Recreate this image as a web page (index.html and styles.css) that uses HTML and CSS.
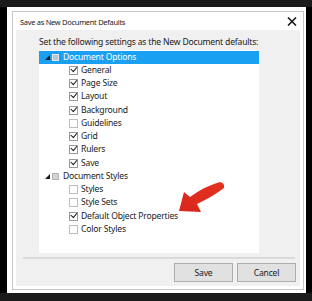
FILE: index.html
```html
<!DOCTYPE html>
<html>
<head>
    <meta charset="utf-8">
    <title>Save as New Document Defaults</title>
    <link rel="stylesheet" href="styles.css">
</head>
<body>
    <div class="screen">
        <div class="dialog">
            <div class="frame">
                <div class="titlebar">
                    <span class="title">Save as New Document Defaults</span>
                    <svg class="close" width="10" height="9" viewBox="0 0 10 9">
                        <path d="M1 0.5 L9 8.5 M9 0.5 L1 8.5" stroke="#1a1a1a" stroke-width="1.6" fill="none"/>
                    </svg>
                </div>
                <div class="content">
                    <p class="intro">Set the following settings as the New Document defaults:</p>
                    <div class="tree">
                        <div class="row group selected">
                            <span class="expander"></span>
                            <span class="folder"></span>
                            <span class="label">Document Options</span>
                        </div>
                        <div class="row item"><span class="check on"></span><span class="label">General</span></div>
                        <div class="row item"><span class="check on"></span><span class="label">Page Size</span></div>
                        <div class="row item"><span class="check on"></span><span class="label">Layout</span></div>
                        <div class="row item"><span class="check on"></span><span class="label">Background</span></div>
                        <div class="row item"><span class="check"></span><span class="label">Guidelines</span></div>
                        <div class="row item"><span class="check on"></span><span class="label">Grid</span></div>
                        <div class="row item"><span class="check on"></span><span class="label">Rulers</span></div>
                        <div class="row item"><span class="check on"></span><span class="label">Save</span></div>
                        <div class="row group">
                            <span class="expander"></span>
                            <span class="folder"></span>
                            <span class="label">Document Styles</span>
                        </div>
                        <div class="row item"><span class="check"></span><span class="label">Styles</span></div>
                        <div class="row item"><span class="check"></span><span class="label">Style Sets</span></div>
                        <div class="row item"><span class="check on"></span><span class="label">Default Object Properties</span></div>
                        <div class="row item"><span class="check"></span><span class="label">Color Styles</span></div>
                    </div>
                    <div class="separator"></div>
                    <div class="buttons">
                        <button class="btn">Save</button>
                        <button class="btn">Cancel</button>
                    </div>
                </div>
            </div>
        </div>
    </div>

    <!-- red callout arrow drawn over the dialog -->
    <svg class="arrow" width="312" height="301" viewBox="0 0 312 301">
        <defs>
            <linearGradient id="arrow-fill" x1="0" y1="1" x2="1" y2="0">
                <stop offset="0" stop-color="#d8261c"/>
                <stop offset="1" stop-color="#e5331f"/>
            </linearGradient>
        </defs>
        <path d="M179 211 L184 192 L190 197 Q205 186 220 182 Q225 183 224 188 Q212 197 197 204 L201 212 Z" fill="url(#arrow-fill)"/>
    </svg>
</body>
</html>
```

FILE: styles.css
```css
* {
    box-sizing: border-box;
}
body {
    margin: 0;
    height: 301px;
    padding: 7px 0 8px;
    background-color: #1b1b1b;
    font-family: "Noto Sans", "Open Sans", sans-serif;
    font-size: 8.6px;
    letter-spacing: -0.2px;
    color: #1a1a1a;
    overflow: hidden;
}
.screen {
    height: 286px;
    padding: 0 6px 0 7px;
    background-color: #000;
}
.dialog {
    height: 100%;
    padding: 4px 2px 3px 5px;
    background-color: #fff;
}
.frame {
    display: flex;
    flex-direction: column;
    height: 100%;
    border: 1px solid #c6c6c6;
}
.titlebar {
    display: flex;
    align-items: center;
    justify-content: space-between;
    height: 18px;
    padding: 1px 6px 0 7px;
}
.title {
    font-size: 7.5px;
    letter-spacing: -0.3px;
}
.close {
    display: block;
}
.content {
    flex: 1;
    display: flex;
    flex-direction: column;
    margin: 0 3px 3px;
    background-color: #f0f0f0;
}
.intro {
    margin: 0;
    padding: 6px 0 0 23px;
    height: 20px;
    line-height: 12px;
}
.tree {
    width: 220px;
    height: 203px;
    margin-left: 23px;
    padding-top: 0.5px;
    background-color: #fff;
}
.row {
    display: flex;
    align-items: center;
    height: 13.25px;
    line-height: 13px;
    white-space: nowrap;
}
.row.selected {
    background-color: #1aa0f2;
    color: #fff;
}
.group {
    padding-left: 6px;
}
.expander {
    width: 0;
    height: 0;
    border-left: 5px solid transparent;
    border-bottom: 5px solid #1a1a1a;
    margin-right: 2px;
}
.folder {
    width: 7px;
    height: 7px;
    border: 1px solid #b4b4b4;
    background-color: #d2d2d2;
    margin-right: 4px;
}
.selected .folder {
    border-color: #e6e6e6;
    background-color: #b9c7d2;
}
.item {
    padding-left: 30px;
}
.check {
    position: relative;
    width: 9px;
    height: 9px;
    border: 1px solid #bdbdbd;
    background-color: #fff;
    margin-right: 3px;
}
.check.on {
    border-color: #9a9a9a;
}
.check.on::after {
    content: "";
    position: absolute;
    left: 1.5px;
    top: 0;
    width: 5px;
    height: 3px;
    border-left: 1.5px solid #111;
    border-bottom: 1.5px solid #111;
    transform: rotate(-50deg);
    transform-origin: 2px 3px;
}
.separator {
    height: 2px;
    margin: 4px 5px 0 7px;
    background-color: #dadada;
}
.buttons {
    display: flex;
    justify-content: flex-end;
    gap: 4px;
    margin-top: 4px;
    padding-right: 4px;
}
.btn {
    width: 59px;
    height: 19px;
    padding: 0;
    font-family: "Noto Sans", "Open Sans", sans-serif;
    font-size: 8.6px;
    letter-spacing: -0.2px;
    color: #1a1a1a;
    background-color: #e1e1e1;
    border: 1px solid #adadad;
}
.arrow {
    position: absolute;
    top: 0;
    left: 0;
    pointer-events: none;
}
```
